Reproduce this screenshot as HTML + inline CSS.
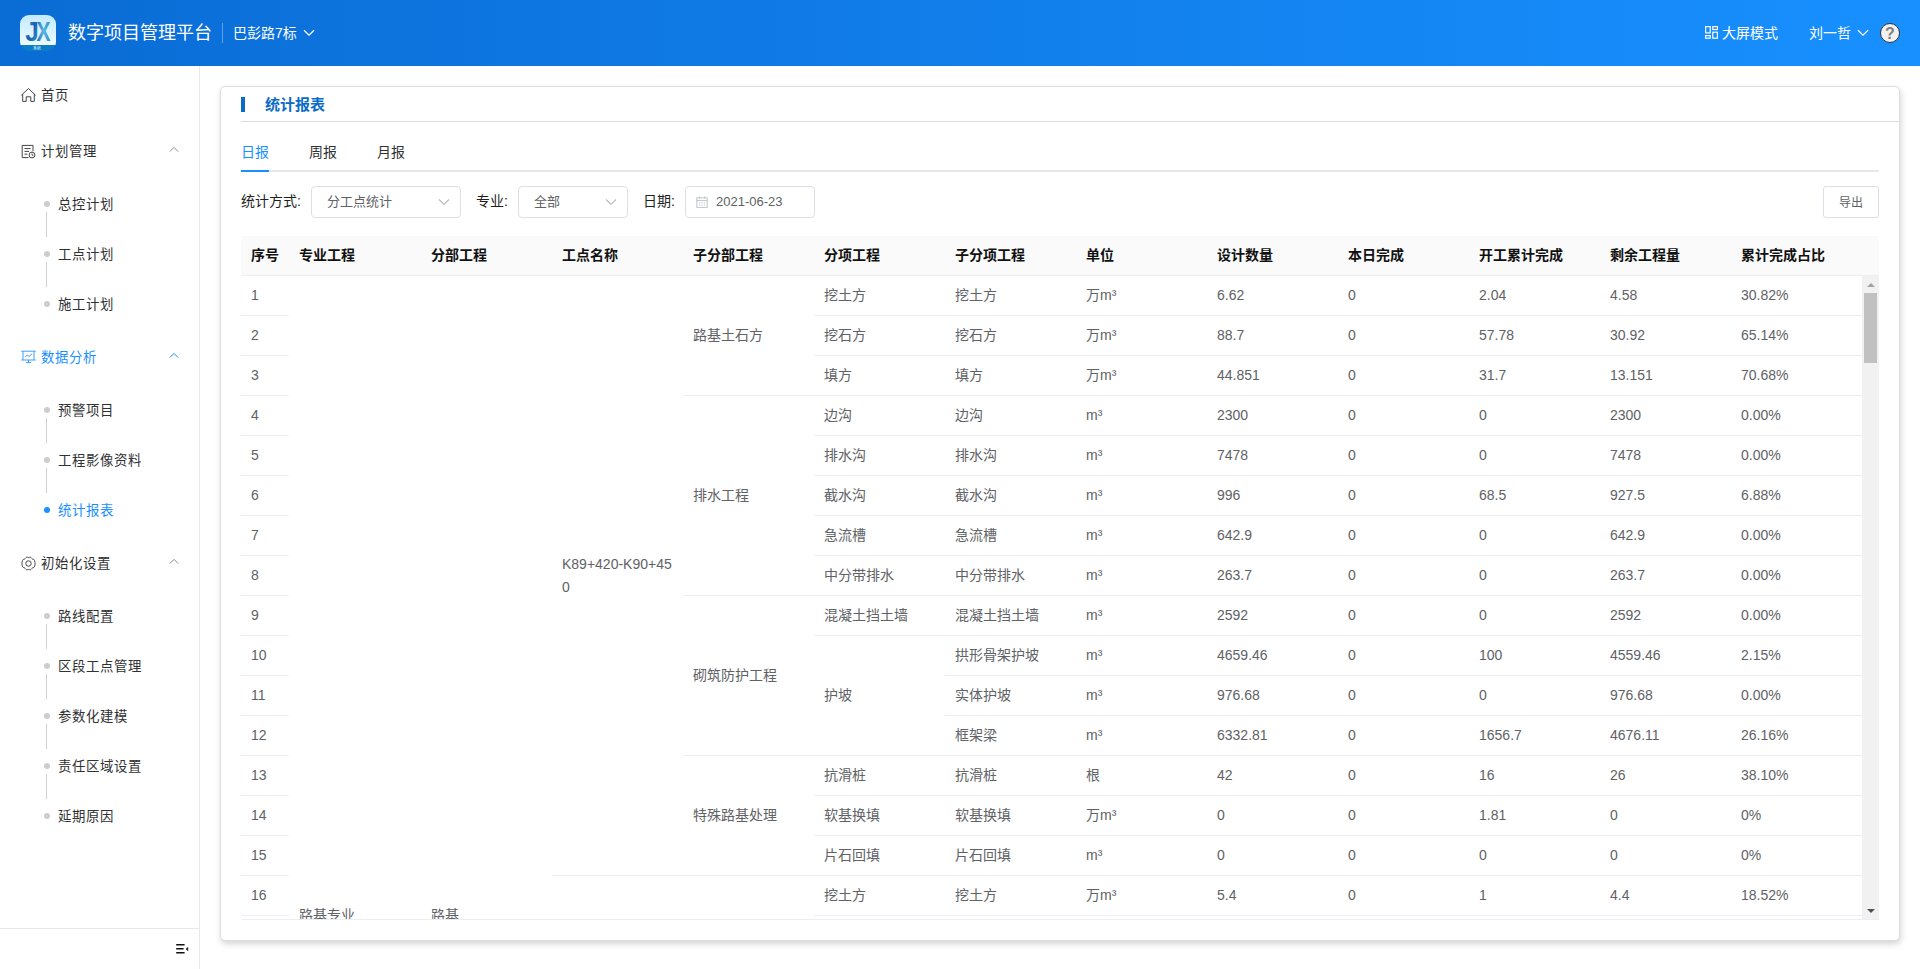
<!DOCTYPE html>
<html lang="zh-CN">
<head>
<meta charset="utf-8">
<title>数字项目管理平台</title>
<style>
*{box-sizing:border-box;margin:0;padding:0}
html,body{width:1920px;height:969px;overflow:hidden;background:#fff}
body{font-family:"Liberation Sans","Noto Sans CJK SC",sans-serif;font-size:14px;color:#303133;position:relative}
.hdr{position:absolute;left:0;top:0;width:1920px;height:66px;background:linear-gradient(90deg,#0a6cd5 0%,#1890ff 100%);color:#fff}
.logo{position:absolute;left:20px;top:15px;width:36px;height:36px;border-radius:9px;overflow:hidden;background:linear-gradient(180deg,#c3eaff 0%,#ecfbff 83%,#0b7dc6 83%,#0b7dc6 100%)}
.logo svg{position:absolute;left:0;top:0}
.ttl{position:absolute;left:68px;top:0;height:66px;line-height:67px;font-size:18px;letter-spacing:0}
.hdiv{position:absolute;left:222px;top:23px;width:1px;height:20px;background:rgba(255,255,255,.35)}
.proj{position:absolute;left:233px;top:0;height:66px;line-height:67px;font-size:14px}
.hdr svg.chev{position:absolute}
.big-screen{position:absolute;left:1722px;top:0;line-height:67px;font-size:14px}
.user{position:absolute;left:1809px;top:0;line-height:67px;font-size:14px}
.help{position:absolute;left:1880px;top:23px;width:20px;height:20px;border-radius:50%;background:#f2f2f2;border:1.5px solid #333;color:#808080;font-weight:bold;font-size:16px;line-height:19px;text-align:center}

.side{position:absolute;left:0;top:66px;width:200px;height:903px;background:#fff;border-right:1px solid #e8e8e8}
.mi{position:absolute;left:0;width:199px;height:40px;line-height:40px;font-size:14px;color:#303133}
.mi .tx{position:absolute;left:41px;top:1px;font-size:13.4px;letter-spacing:0.6px}
.mi svg.ic{position:absolute;left:20.5px;top:13px}
.mi svg.ar{position:absolute;left:169px;top:15px}
.mi.act{color:#1890ff}
.si{position:absolute;left:0;width:199px;height:40px;line-height:40px;font-size:14px;color:#303133}
.si .tx{position:absolute;left:58px;top:1px;font-size:13.4px;letter-spacing:0.6px}
.si .dot{position:absolute;left:44px;top:17px;width:6px;height:6px;border-radius:50%;background:#cdcdcd}
.si .ln{position:absolute;left:46px;top:28px;width:1px;height:25px;background:#d0d0d0}
.si.act{color:#1890ff}
.si.act .dot{background:#1890ff}
.sfoot{position:absolute;left:0;top:862px;width:199px;height:41px;border-top:1px solid #e8e8e8}

.card{position:absolute;left:220px;top:86px;width:1680px;height:855px;background:#fff;border:1px solid #dedede;border-radius:5px;box-shadow:1px 3px 6px rgba(0,0,0,.17)}
.in{position:absolute;left:1px;top:1px;width:1676px;height:851px}
.ct{position:absolute;left:19px;top:-1px;width:1658px;height:35px;border-bottom:1px solid #dcdcdc}
.ct .bar{position:absolute;left:0;top:10px;width:4px;height:15px;background:#0b6cc6}
.ct .t{position:absolute;left:24px;top:1px;line-height:33px;font-size:15px;font-weight:bold;color:#0b6cc6}
.tabs{position:absolute;left:19px;top:47px;width:1638px;height:37px;border-bottom:2px solid #e4e7ed}
.tab{position:absolute;top:0;line-height:34px;font-size:14px;color:#303133}
.tab.act{color:#1890ff}
.tabbar{position:absolute;left:0;top:35px;width:28px;height:2px;background:#1890ff}
.flt{position:absolute;top:98px;height:32px;line-height:31px;font-size:14px;color:#1f1f1f}
.sel{position:absolute;top:98px;height:32px;border:1px solid #dcdfe6;border-radius:4px;background:#fff;font-size:13px;color:#606266;line-height:29px;padding-left:15px}
.sel svg{position:absolute;right:10px;top:11px}
.btn{position:absolute;left:1601px;top:98px;width:56px;height:32px;border:1px solid #dcdfe6;border-radius:3px;font-size:12px;color:#606266;line-height:32px;text-align:center;background:#fff}

.th{position:absolute;left:19px;top:148px;width:1638px;height:40px;background:#fafafa;border-bottom:1px solid #ebeef5}
.th span{position:absolute;top:0;line-height:39px;font-weight:bold;color:#111;font-size:14px;white-space:nowrap}
.tb{position:absolute;left:19px;top:188px;width:1621px;height:643px;overflow:hidden}
.tline{position:absolute;left:19px;top:831px;width:1638px;height:1px;background:#ebeef5}
table{border-collapse:separate;border-spacing:0;table-layout:fixed;width:1621px}
td{height:40px;padding:0 10px;border-bottom:1px solid #ebeef5;font-size:14px;color:#606266;line-height:23px;vertical-align:middle;word-break:break-all}
td.big{vertical-align:top;padding-top:627px}
td.low{vertical-align:top;padding-top:60px}
.sb{position:absolute;left:1640px;top:188px;width:17px;height:643px;background:#f1f1f1}
.sb .thumb{position:absolute;left:2px;top:17px;width:13px;height:70px;background:#c1c1c1}
.sb .up{position:absolute;left:4.5px;top:7px;width:0;height:0;border-left:4px solid transparent;border-right:4px solid transparent;border-bottom:4px solid #a3a3a3}
.sb .dn{position:absolute;left:4.5px;bottom:6px;width:0;height:0;border-left:4px solid transparent;border-right:4px solid transparent;border-top:4px solid #505050}
</style>
</head>
<body>
<div class="hdr">
  <div class="logo">
    <svg width="36" height="36" viewBox="0 0 36 36"><defs><linearGradient id="lg" x1="0" y1="0" x2="1" y2="1"><stop offset="0" stop-color="#2f9ad6"/><stop offset="0.5" stop-color="#1a5fb0"/><stop offset="1" stop-color="#3aa6dc"/></linearGradient><linearGradient id="lg2" x1="0" y1="0" x2="1" y2="0"><stop offset="0" stop-color="#1d64b4"/><stop offset="0.5" stop-color="#5db8e6"/><stop offset="1" stop-color="#2a86c6"/></linearGradient></defs>
    <text x="5.2" y="26.2" font-family="Liberation Sans, sans-serif" font-weight="bold" font-size="28" fill="url(#lg)" textLength="13.5" lengthAdjust="spacingAndGlyphs">J</text>
    <text x="16.5" y="26.2" font-family="Liberation Sans, sans-serif" font-weight="bold" font-size="28" fill="url(#lg2)" textLength="14" lengthAdjust="spacingAndGlyphs">X</text>
    <text x="13" y="34.5" font-family="Liberation Sans, Noto Sans CJK SC, sans-serif" font-size="4" fill="#d6ecf8">系统</text></svg>
  </div>
  <div class="ttl">数字项目管理平台</div>
  <div class="hdiv"></div>
  <div class="proj">巴彭路7标</div>
  <svg class="chev" style="left:303px;top:29px" width="12" height="8" viewBox="0 0 12 8"><path d="M1 1.2 L6 6.2 L11 1.2" fill="none" stroke="#fff" stroke-width="1.3"/></svg>
  <svg class="chev" style="left:1705px;top:26px" width="13" height="13" viewBox="0 0 13 13"><g fill="none" stroke="#fff" stroke-width="1.2"><rect x="0.6" y="0.6" width="4.6" height="6.3"/><rect x="0.6" y="9.6" width="4.6" height="2.6"/><rect x="7.8" y="0.6" width="4.6" height="2.9"/><rect x="7.8" y="6.2" width="4.6" height="6"/></g></svg>
  <div class="big-screen">大屏模式</div>
  <div class="user">刘一哲</div>
  <svg class="chev" style="left:1857px;top:29px" width="12" height="8" viewBox="0 0 12 8"><path d="M1 1.2 L6 6.2 L11 1.2" fill="none" stroke="#fff" stroke-width="1.3"/></svg>
  <div class="help">?</div>
</div>

<div class="side">
  <div class="mi" style="top:9px"><svg class="ic" width="15" height="15" viewBox="0 0 15 15"><path d="M0.3 7.3 L7.5 0.5 L14.7 7.3 M1.7 6.1 V13.4 H5.2 V8.8 H9.8 V13.4 H13.3 V6.1" fill="none" stroke="#444" stroke-width="1" stroke-linejoin="round"/></svg><span class="tx">首页</span></div>
  <div class="mi" style="top:65px"><svg class="ic" width="15" height="15" viewBox="0 0 15 15"><g fill="none" stroke="#444" stroke-width="1"><path d="M7.5 13.6 H1.2 V1.4 H12 V7.2"/><path d="M3.5 4.6 H9.6 M3.5 7.4 H8 M3.5 10.2 H6.4"/><circle cx="11" cy="11" r="2.9"/><path d="M11 9.6 V11.2 H12.3"/></g></svg><span class="tx">计划管理</span><svg class="ar" width="10" height="7" viewBox="0 0 10 7"><path d="M0.8 5.6 L5 1.4 L9.2 5.6" fill="none" stroke="#8a8a8a" stroke-width="1"/></svg></div>
  <div class="si" style="top:118px"><i class="dot"></i><i class="ln"></i><span class="tx">总控计划</span></div>
  <div class="si" style="top:168px"><i class="dot"></i><i class="ln"></i><span class="tx">工点计划</span></div>
  <div class="si" style="top:218px"><i class="dot"></i><span class="tx">施工计划</span></div>
  <div class="mi act" style="top:271px"><svg class="ic" width="15" height="15" viewBox="0 0 15 15"><g fill="none" stroke="#3d9fff" stroke-width="1"><path d="M0.3 1.2 H14.7 M0.3 10 H14.7 M2 1.2 V10 M13 1.2 V10 M7.5 10 V12.6 M5 12.6 H10 M4 7.2 L6.2 5 L8 6.6 L11 3.8"/></g></svg><span class="tx">数据分析</span><svg class="ar" width="10" height="7" viewBox="0 0 10 7"><path d="M0.8 5.6 L5 1.4 L9.2 5.6" fill="none" stroke="#1890ff" stroke-width="1"/></svg></div>
  <div class="si" style="top:324px"><i class="dot"></i><i class="ln"></i><span class="tx">预警项目</span></div>
  <div class="si" style="top:374px"><i class="dot"></i><i class="ln"></i><span class="tx">工程影像资料</span></div>
  <div class="si act" style="top:424px"><i class="dot"></i><span class="tx">统计报表</span></div>
  <div class="mi" style="top:477px"><svg class="ic" width="15" height="15" viewBox="0 0 15 15"><g fill="none" stroke="#444" stroke-width="1" stroke-linejoin="round"><path d="M5 1.6 Q5.6 0.9 6.4 1.3 Q7.5 1.9 8.6 1.3 Q9.4 0.9 10 1.6 L10.9 2.6 Q11.4 3.3 12.4 3.4 Q13.3 3.6 13.5 4.5 L14 6.4 Q14.2 7.5 14 8.6 L13.5 10.5 Q13.3 11.4 12.4 11.6 Q11.4 11.7 10.9 12.4 L10 13.4 Q9.4 14.1 8.6 13.7 Q7.5 13.1 6.4 13.7 Q5.6 14.1 5 13.4 L4.1 12.4 Q3.6 11.7 2.6 11.6 Q1.7 11.4 1.5 10.5 L1 8.6 Q0.8 7.5 1 6.4 L1.5 4.5 Q1.7 3.6 2.6 3.4 Q3.6 3.3 4.1 2.6 Z"/><circle cx="7.5" cy="7.5" r="2.7"/></g></svg><span class="tx">初始化设置</span><svg class="ar" width="10" height="7" viewBox="0 0 10 7"><path d="M0.8 5.6 L5 1.4 L9.2 5.6" fill="none" stroke="#8a8a8a" stroke-width="1"/></svg></div>
  <div class="si" style="top:530px"><i class="dot"></i><i class="ln"></i><span class="tx">路线配置</span></div>
  <div class="si" style="top:580px"><i class="dot"></i><i class="ln"></i><span class="tx">区段工点管理</span></div>
  <div class="si" style="top:630px"><i class="dot"></i><i class="ln"></i><span class="tx">参数化建模</span></div>
  <div class="si" style="top:680px"><i class="dot"></i><i class="ln"></i><span class="tx">责任区域设置</span></div>
  <div class="si" style="top:730px"><i class="dot"></i><span class="tx">延期原因</span></div>
  <div class="sfoot"><svg style="position:absolute;left:176px;top:14px" width="13" height="12" viewBox="0 0 13 12"><g fill="none" stroke="#111" stroke-width="1.4"><path d="M0.2 1.8 H8.6 M0.2 5.8 H7.6 M0.2 9.8 H8.6"/></g><path d="M12.2 3.8 V8.2 L9.6 6 Z" fill="#222"/></svg></div>
</div>

<div class="card"><div class="in">
  <div class="ct"><div class="bar"></div><div class="t">统计报表</div></div>
  <div class="tabs">
    <div class="tab act" style="left:0">日报</div>
    <div class="tab" style="left:68px">周报</div>
    <div class="tab" style="left:136px">月报</div>
    <div class="tabbar"></div>
  </div>
  <div class="flt" style="left:19px">统计方式:</div>
  <div class="sel" style="left:89px;width:150px">分工点统计<svg width="12" height="8" viewBox="0 0 12 8"><path d="M1 1.5 L6 6.3 L11 1.5" fill="none" stroke="#b4b8bf" stroke-width="1.1"/></svg></div>
  <div class="flt" style="left:254px">专业:</div>
  <div class="sel" style="left:296px;width:110px">全部<svg width="12" height="8" viewBox="0 0 12 8"><path d="M1 1.5 L6 6.3 L11 1.5" fill="none" stroke="#b4b8bf" stroke-width="1.1"/></svg></div>
  <div class="flt" style="left:421px">日期:</div>
  <div class="sel" style="left:463px;width:130px;padding-left:30px">2021-06-23<svg style="left:10px;top:9px;right:auto" width="12" height="12" viewBox="0 0 12 12"><g fill="none" stroke="#c0c4cc" stroke-width="1"><rect x="0.8" y="1.8" width="10.4" height="9.6"/><path d="M0.8 4.6H11.2M3.4 0.4V2.6M8.6 0.4V2.6"/><path d="M3 6.8H9M3 9H9" stroke-dasharray="1.2 1.2"/></g></svg></div>
  <div class="btn">导出</div>

  <div class="th">
    <span style="left:10px">序号</span><span style="left:58px">专业工程</span><span style="left:190px">分部工程</span><span style="left:321px">工点名称</span><span style="left:452px">子分部工程</span><span style="left:583px">分项工程</span><span style="left:714px">子分项工程</span><span style="left:845px">单位</span><span style="left:976px">设计数量</span><span style="left:1107px">本日完成</span><span style="left:1238px">开工累计完成</span><span style="left:1369px">剩余工程量</span><span style="left:1500px">累计完成占比</span>
  </div>
  <div class="tb">
    <table>
      <colgroup><col style="width:48px"><col style="width:132px"><col style="width:131px"><col style="width:131px"><col style="width:131px"><col style="width:131px"><col style="width:131px"><col style="width:131px"><col style="width:131px"><col style="width:131px"><col style="width:131px"><col style="width:131px"><col style="width:131px"></colgroup>
      <tbody>
<tr><td>1</td><td rowspan="32">路基专业</td><td rowspan="32">路基</td><td rowspan="15">K89+420-K90+450</td><td rowspan="3">路基土石方</td><td>挖土方</td><td>挖土方</td><td>万m³</td><td>6.62</td><td>0</td><td>2.04</td><td>4.58</td><td>30.82%</td></tr>
<tr><td>2</td><td>挖石方</td><td>挖石方</td><td>万m³</td><td>88.7</td><td>0</td><td>57.78</td><td>30.92</td><td>65.14%</td></tr>
<tr><td>3</td><td>填方</td><td>填方</td><td>万m³</td><td>44.851</td><td>0</td><td>31.7</td><td>13.151</td><td>70.68%</td></tr>
<tr><td>4</td><td rowspan="5">排水工程</td><td>边沟</td><td>边沟</td><td>m³</td><td>2300</td><td>0</td><td>0</td><td>2300</td><td>0.00%</td></tr>
<tr><td>5</td><td>排水沟</td><td>排水沟</td><td>m³</td><td>7478</td><td>0</td><td>0</td><td>7478</td><td>0.00%</td></tr>
<tr><td>6</td><td>截水沟</td><td>截水沟</td><td>m³</td><td>996</td><td>0</td><td>68.5</td><td>927.5</td><td>6.88%</td></tr>
<tr><td>7</td><td>急流槽</td><td>急流槽</td><td>m³</td><td>642.9</td><td>0</td><td>0</td><td>642.9</td><td>0.00%</td></tr>
<tr><td>8</td><td>中分带排水</td><td>中分带排水</td><td>m³</td><td>263.7</td><td>0</td><td>0</td><td>263.7</td><td>0.00%</td></tr>
<tr><td>9</td><td rowspan="4">砌筑防护工程</td><td>混凝土挡土墙</td><td>混凝土挡土墙</td><td>m³</td><td>2592</td><td>0</td><td>0</td><td>2592</td><td>0.00%</td></tr>
<tr><td>10</td><td rowspan="3">护坡</td><td>拱形骨架护坡</td><td>m³</td><td>4659.46</td><td>0</td><td>100</td><td>4559.46</td><td>2.15%</td></tr>
<tr><td>11</td><td>实体护坡</td><td>m³</td><td>976.68</td><td>0</td><td>0</td><td>976.68</td><td>0.00%</td></tr>
<tr><td>12</td><td>框架梁</td><td>m³</td><td>6332.81</td><td>0</td><td>1656.7</td><td>4676.11</td><td>26.16%</td></tr>
<tr><td>13</td><td rowspan="3">特殊路基处理</td><td>抗滑桩</td><td>抗滑桩</td><td>根</td><td>42</td><td>0</td><td>16</td><td>26</td><td>38.10%</td></tr>
<tr><td>14</td><td>软基换填</td><td>软基换填</td><td>万m³</td><td>0</td><td>0</td><td>1.81</td><td>0</td><td>0%</td></tr>
<tr><td>15</td><td>片石回填</td><td>片石回填</td><td>m³</td><td>0</td><td>0</td><td>0</td><td>0</td><td>0%</td></tr>
<tr><td>16</td><td rowspan="15">K90+450-K91+200</td><td rowspan="3">路基土石方</td><td>挖土方</td><td>挖土方</td><td>万m³</td><td>5.4</td><td>0</td><td>1</td><td>4.4</td><td>18.52%</td></tr>
<tr><td>17</td><td>挖石方</td><td>挖石方</td><td>万m³</td><td>12.6</td><td>0</td><td>3.2</td><td>9.4</td><td>25.40%</td></tr>
<tr><td>18</td><td>填方</td><td>填方</td><td>万m³</td><td>44.851</td><td>0</td><td>31.7</td><td>13.151</td><td>70.68%</td></tr>
<tr><td>19</td><td rowspan="5">排水工程</td><td>边沟</td><td>边沟</td><td>m³</td><td>2300</td><td>0</td><td>0</td><td>2300</td><td>0.00%</td></tr>
<tr><td>20</td><td>排水沟</td><td>排水沟</td><td>m³</td><td>7478</td><td>0</td><td>0</td><td>7478</td><td>0.00%</td></tr>
<tr><td>21</td><td>截水沟</td><td>截水沟</td><td>m³</td><td>996</td><td>0</td><td>68.5</td><td>927.5</td><td>6.88%</td></tr>
<tr><td>22</td><td>急流槽</td><td>急流槽</td><td>m³</td><td>642.9</td><td>0</td><td>0</td><td>642.9</td><td>0.00%</td></tr>
<tr><td>23</td><td>中分带排水</td><td>中分带排水</td><td>m³</td><td>263.7</td><td>0</td><td>0</td><td>263.7</td><td>0.00%</td></tr>
<tr><td>24</td><td rowspan="4">砌筑防护工程</td><td>混凝土挡土墙</td><td>混凝土挡土墙</td><td>m³</td><td>2592</td><td>0</td><td>0</td><td>2592</td><td>0.00%</td></tr>
<tr><td>25</td><td rowspan="3">护坡</td><td>拱形骨架护坡</td><td>m³</td><td>4659.46</td><td>0</td><td>100</td><td>4559.46</td><td>2.15%</td></tr>
<tr><td>26</td><td>实体护坡</td><td>m³</td><td>976.68</td><td>0</td><td>0</td><td>976.68</td><td>0.00%</td></tr>
<tr><td>27</td><td>框架梁</td><td>m³</td><td>6332.81</td><td>0</td><td>1656.7</td><td>4676.11</td><td>26.16%</td></tr>
<tr><td>28</td><td rowspan="3">特殊路基处理</td><td>抗滑桩</td><td>抗滑桩</td><td>根</td><td>42</td><td>0</td><td>16</td><td>26</td><td>38.10%</td></tr>
<tr><td>29</td><td>软基换填</td><td>软基换填</td><td>万m³</td><td>0</td><td>0</td><td>1.81</td><td>0</td><td>0%</td></tr>
<tr><td>30</td><td>片石回填</td><td>片石回填</td><td>m³</td><td>0</td><td>0</td><td>0</td><td>0</td><td>0%</td></tr>
<tr><td>31</td><td rowspan="2">K91+200-K91+860</td><td rowspan="2">路基土石方</td><td>挖土方</td><td>挖土方</td><td>万m³</td><td>3.1</td><td>0</td><td>0</td><td>3.1</td><td>0.00%</td></tr>
<tr><td>32</td><td>挖石方</td><td>挖石方</td><td>万m³</td><td>7.9</td><td>0</td><td>0</td><td>7.9</td><td>0.00%</td></tr>
      </tbody>
    </table>
  </div>
  <div class="sb"><div class="up"></div><div class="thumb"></div><div class="dn"></div></div>
  <div class="tline"></div>
</div></div>
</body>
</html>
